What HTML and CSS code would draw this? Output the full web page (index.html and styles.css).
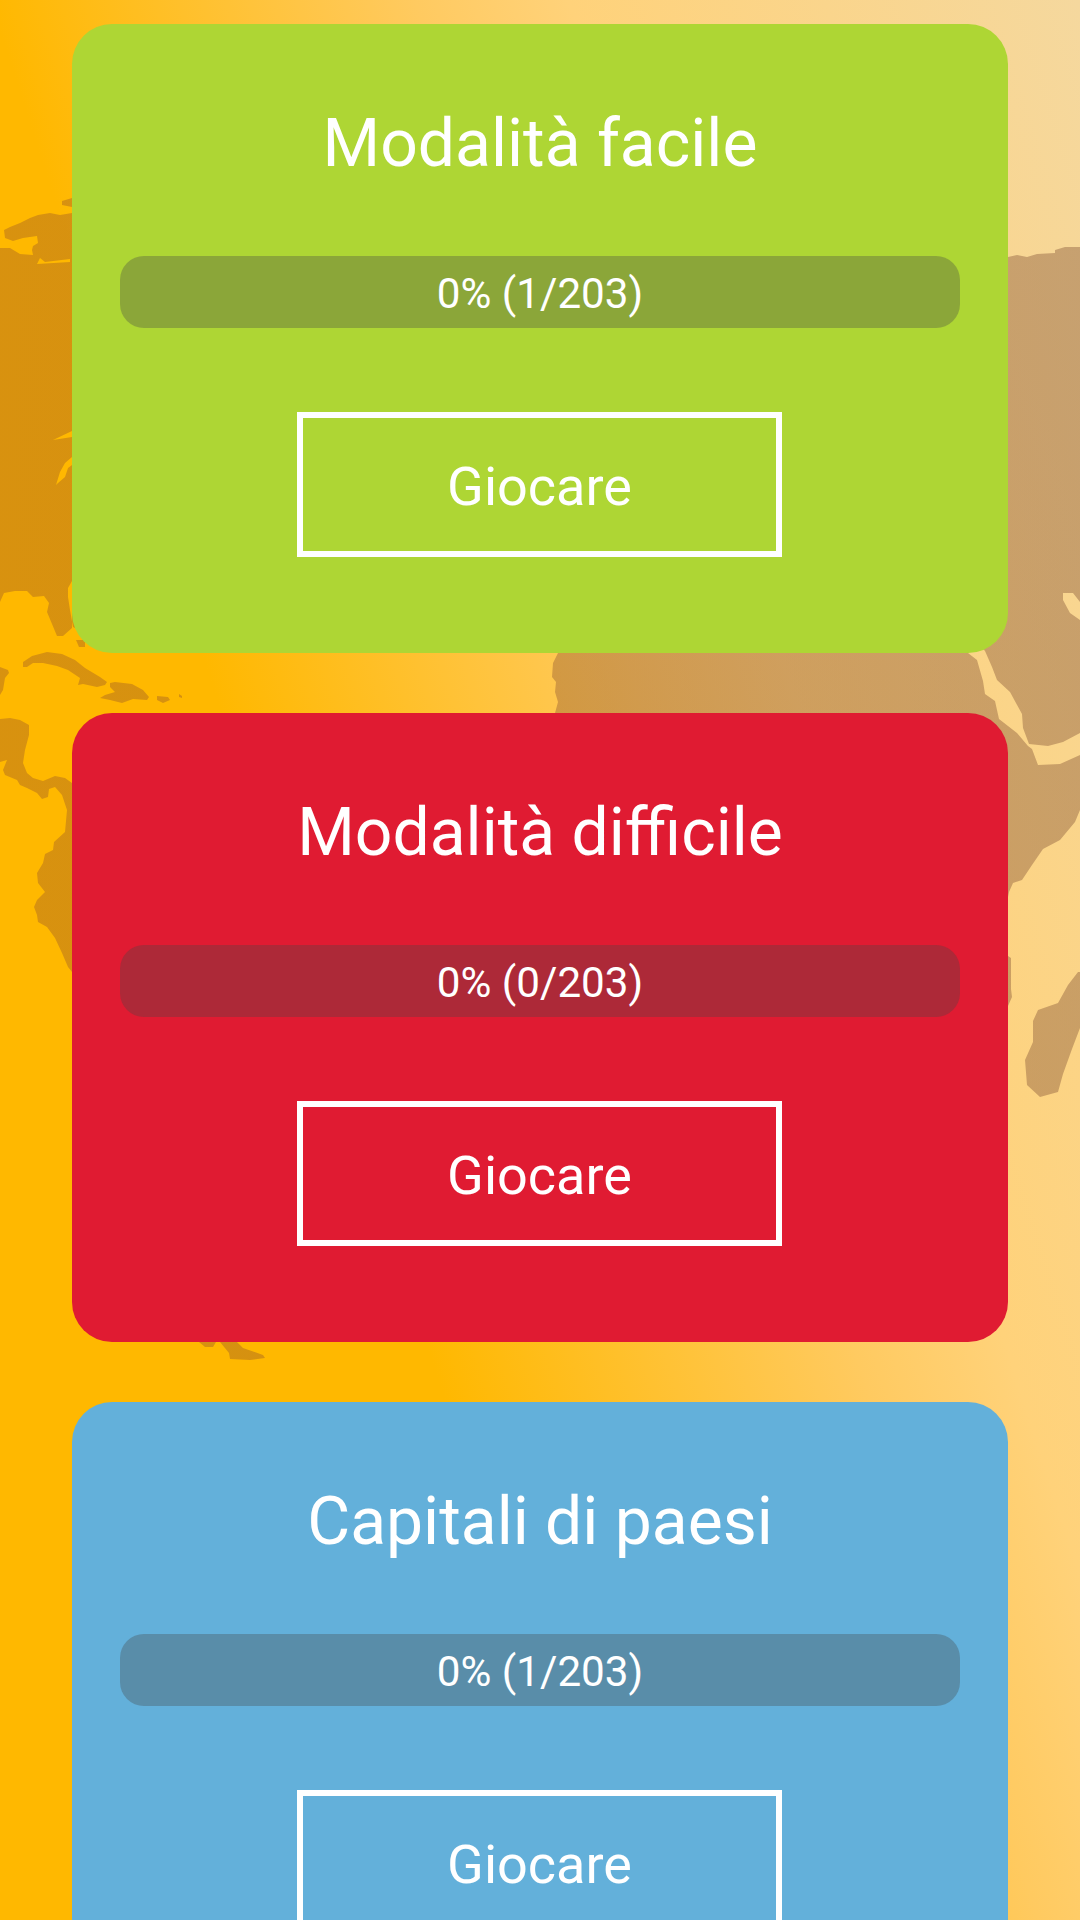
FILE: index.html
```html
<!DOCTYPE html>
<html lang="it">
<head>
  <meta charset="UTF-8" />
  <title>Modalità di gioco</title>
  <link rel="stylesheet" href="styles.css">
</head>
<body>
  <!-- mappa del mondo dietro le schede -->
  <svg class="world-map" viewBox="0 0 1080 1920" width="1080" height="1920" aria-hidden="true">
    <defs>
      <linearGradient id="land" gradientUnits="userSpaceOnUse" x1="0" y1="0" x2="1080" y2="0">
        <stop offset="0" stop-color="rgb(147,78,42)" stop-opacity="0.36"/>
        <stop offset="1" stop-color="rgb(127,79,52)" stop-opacity="0.4"/>
      </linearGradient>
    </defs>
    <path fill-rule="evenodd" d="M72 198L62 201L62 205L72 207Z"/>
    <path fill-rule="evenodd" d="M0 248L10 248L20 254L33 255L32 250L33 246L38 243L37 236L23 238L13 241L5 238L4 230L10 227L20 223L30 218L38 215L50 213L60 215L72 213L100 213L100 640L73 627L70 610L68 597L68 588L72 581L72 628L63 636L57 636L52 624L47 612L49 603L44 596L33 597L27 591L15 591L4 593L0 602Z
      M40 258L45 262L70 259L70 262L37 264Z
      M53 440L72 431L72 437Z
      M56 485L60 472L65 463L72 457L72 465L68 468L65 477L58 483Z"/>
    <path d="M76 640L85 640L85 647L79 647Z"/>
    <path d="M23 667L23 662L32 656L47 652L62 654L75 660L85 668L100 677L107 682L105 685L97 687L83 684L78 685L80 678L68 670L57 666L43 663L33 663L27 667Z"/>
    <path d="M110 683L115 682L132 684L143 690L149 697L147 700L133 699L122 703L110 700L100 698L105 695L115 692L110 687Z"/>
    <path d="M157 696L168 697L170 700L163 703L157 700Z"/>
    <path d="M179 694L182 696L182 698L179 697Z"/>
    <path d="M0 667L8 670L9 673L5 678L3 690L0 695Z"/>
    <path d="M0 719L10 718L20 720L29 725L29 735L25 750L23 763L27 773L33 778L43 781L55 776L65 778L72 783L90 783L90 972L72 972L68 967L62 953L55 938L47 927L38 922L37 915L34 907L37 900L45 892L38 883L37 873L43 863L45 854L53 850L54 842L65 832L67 810L62 795L55 787L49 789L48 797L42 799L37 793L27 788L20 785L17 780L5 775L3 770L7 760L0 762Z"/>
    <path d="M199 1342L205 1347L213 1347L216 1342L216 1330L199 1330Z"/>
    <path d="M220 1342L229 1353L230 1359L250 1360L265 1358L263 1355L243 1348L237 1342L237 1330L220 1330Z"/>
    <path fill-rule="evenodd" d="M600 257L1008 257L1017 255L1027 257L1037 254L1055 253L1055 250L1065 247L1080 247L1080 733L1063 742L1048 746L1029 744L1023 728L1022 714L1010 692L997 680L992 667L985 651L975 640L968 653L977 660L983 681L985 694L995 701L999 719L1017 733L1028 746L1032 749L1038 765L1060 764L1080 755L1080 810L1075 822L1060 840L1043 849L1032 865L1022 880L1013 883L1009 892L1008 897L600 897L555 713L558 702L555 692L556 682L552 677L553 663L558 653L560 640Z
      M1063 593L1073 593L1080 602L1080 620L1070 613L1063 600Z"/>
    <path d="M1000 950L1008 956L1011 958L1011 989L1012 997L1008 1006L1000 1006Z"/>
    <path d="M1080 972L1078 972L1068 985L1058 1003L1038 1010L1033 1021L1033 1042L1025 1060L1027 1085L1040 1097L1058 1092L1063 1074L1072 1049L1080 1028Z"/>
  </svg>

  <main class="cards">
    <section class="card card-easy">
      <h2 class="card-title">Modalità facile</h2>
      <div class="progress">0% (1/203)</div>
      <a class="play-button" href="#">Giocare</a>
    </section>

    <section class="card card-hard">
      <h2 class="card-title">Modalità difficile</h2>
      <div class="progress">0% (0/203)</div>
      <a class="play-button" href="#">Giocare</a>
    </section>

    <section class="card card-capitals">
      <h2 class="card-title">Capitali di paesi</h2>
      <div class="progress">0% (1/203)</div>
      <a class="play-button" href="#">Giocare</a>
    </section>
  </main>
</body>
</html>
```

FILE: styles.css
```css
html, body {
  height: 1920px;
  overflow: hidden;
}
body {
  position: relative;
  margin: 0;
  font-family: Roboto, sans-serif;
  color: white;
  background: linear-gradient(72deg, #ffb800 36%, #ffca60 61%, #ffd27a 70%, #f5d89e 100%);
}
.world-map {
  position: absolute;
  top: 0;
  left: 0;
  fill: url(#land);
}
.cards {
  position: relative;
  display: flex;
  flex-direction: column;
  gap: 60px;
  padding: 24px 72px;
}
.card {
  flex: none;
  display: flex;
  flex-direction: column;
  align-items: center;
  padding: 76px 48px 96px;
  border-radius: 40px;
}
.card-easy {
  background: #aed634;
}
.card-hard {
  background: #e01b32;
}
.card-capitals {
  background: #63b0da;
}
.card-title {
  margin: 0 0 68px;
  font-size: 66px;
  font-weight: 400;
  line-height: 88px;
}
.progress {
  width: 100%;
  height: 72px;
  margin-bottom: 84px;
  border-radius: 24px;
  background: rgba(70, 70, 70, 0.33);
  font-size: 42.2px;
  line-height: 76px;
  text-align: center;
}
.play-button {
  box-sizing: border-box;
  width: 485px;
  height: 145px;
  margin-right: 1px;
  border: 6px solid white;
  color: white;
  font-size: 54px;
  line-height: 137px;
  text-align: center;
  text-decoration: none;
}
```
